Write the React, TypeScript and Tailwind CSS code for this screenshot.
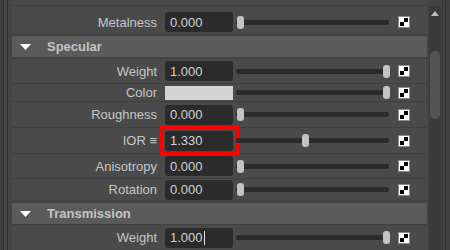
import React from "react";

type RowProps = {
  label: string;
  value?: string;
  thumb: string;
  rowCls: string;
  swatch?: boolean;
  highlight?: boolean;
  caret?: boolean;
};

function Checker() {
  return (
    <div className="ml-[9px] w-[12px] h-[12px] border border-[#8c8c8c] bg-white grid grid-cols-2 grid-rows-2 p-[1px]">
      <div className="bg-white" />
      <div className="bg-black" />
      <div className="bg-black" />
      <div className="bg-white" />
    </div>
  );
}

function Row({ label, value, thumb, rowCls, swatch, highlight, caret }: RowProps) {
  return (
    <div className={`border-t border-[#404040] bg-[#4a4a4a] ${rowCls}`}>
      <div className="flex items-center h-[20px]">
        <div className="w-[145px] text-right text-[#c6c6c6] whitespace-nowrap">{label}</div>
        {swatch ? (
          <div className="ml-[8px] w-[68px] h-[14px] bg-[#d4d4d4]" />
        ) : (
          <div className="relative ml-[8px] w-[68px] h-[20px]">
            <div className="w-full h-full bg-[#2b2b2b] rounded-[3px] flex items-center pl-[5px] text-[#d2d2d2]">
              {value}
              {caret && <span className="ml-[1px] w-[1px] h-[14px] bg-[#e0e0e0]" />}
            </div>
            {highlight && (
              <div className="absolute -left-[5px] -right-[6px] -top-[5px] -bottom-[5px] border-4 border-[#ff0000]" />
            )}
          </div>
        )}
        <div className="relative ml-[3px] w-[153px] h-[13px]">
          <div className="absolute left-0 right-0 top-[4px] h-[5px] rounded-full bg-[#2b2b2b]" />
          <div className={`absolute top-0 w-[7px] h-[13px] rounded-[3px] bg-[#c3c3c3] ${thumb}`} />
        </div>
        <Checker />
      </div>
    </div>
  );
}

function Header({ title }: { title: string }) {
  return (
    <div className="h-[21px] bg-[#5b5b5b] rounded-[2px] flex items-center">
      <svg width="11" height="6" viewBox="0 0 11 6" className="ml-[8px]">
        <polygon points="0,0 11,0 5.5,6" fill="#ffffff" />
      </svg>
      <span className="ml-[16px] font-bold text-[#c4c4c4]">{title}</span>
    </div>
  );
}

export default function App() {
  return (
    <div className="w-[450px] h-[250px] overflow-hidden bg-[#444444] flex text-[13px] leading-none font-['Liberation_Sans',Arial,sans-serif]">
      {/* left frame */}
      <div className="flex h-full">
        <div className="w-[3px] bg-[#3e3e3e]" />
        <div className="w-[1px] bg-[#2d2d2d]" />
        <div className="w-[3px] bg-[#464646]" />
        <div className="w-[1px] bg-[#2f2f2f]" />
        <div className="w-[4px] bg-[#444444]" />
      </div>

      {/* attribute list */}
      <div className="w-[415px] flex flex-col">
        <div className="h-[5px] bg-[#4a4a4a]" />
        <Row label="Metalness" value="0.000" thumb="left-[1px]" rowCls="h-[28px] pt-[6px]" />
        <div className="mt-[3px]">
          <Header title="Specular" />
        </div>
        <div className="mt-[1px]" />
        <Row label="Weight" value="1.000" thumb="left-[147px]" rowCls="h-[25px] flex items-center" />
        <Row label="Color" swatch thumb="left-[147px]" rowCls="h-[18px] flex items-center" />
        <Row label="Roughness" value="0.000" thumb="left-[1px]" rowCls="h-[26px] flex items-center" />
        <Row label="IOR ≡" value="1.330" thumb="left-[66px]" highlight rowCls="h-[26px] flex items-center" />
        <Row label="Anisotropy" value="0.000" thumb="left-[1px]" rowCls="h-[25px] flex items-center" />
        <Row label="Rotation" value="0.000" thumb="left-[1px]" rowCls="h-[22px] flex items-center" />
        <div className="mt-[3px]">
          <Header title="Transmission" />
        </div>
        <Row label="Weight" value="1.000" caret thumb="left-[147px]" rowCls="h-[26px] flex items-center" />
      </div>

      <div className="w-[2px]" />

      {/* scrollbar */}
      <div className="w-[12px] flex flex-col">
        <div className="h-[6px]" />
        <div className="flex-1 bg-[#3a3a3a] flex flex-col items-center">
          <svg width="8" height="5" viewBox="0 0 8 5" className="mt-[5px]">
            <polygon points="4,0 8,5 0,5" fill="#bdbdbd" />
          </svg>
          <div className="mt-[35px] w-[10px] h-[68px] rounded-full bg-[#555555]" />
        </div>
      </div>

      {/* right frame */}
      <div className="flex h-full">
        <div className="w-[1px] bg-[#474747]" />
        <div className="w-[1px] bg-[#2d2d2d]" />
        <div className="w-[2px] bg-[#464646]" />
        <div className="w-[1px] bg-[#2d2d2d]" />
        <div className="w-[4px] bg-[#404040]" />
      </div>
    </div>
  );
}
